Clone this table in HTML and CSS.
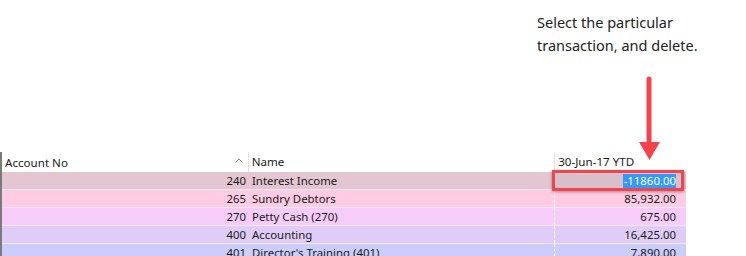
FILE: index.html
```html
<!DOCTYPE html>
<html>
<head>
<meta charset="utf-8">
<link rel="stylesheet" href="styles.css">
</head>
<body>
<div class="page">
  <div class="top">
    <p class="note">Select the particular<br>transaction, and delete.</p>
  </div>
  <div class="grid">
    <div class="row head">
      <div class="c1"><span>Account No</span><svg class="sort" width="8" height="5" viewBox="0 0 8 5"><path d="M0.5 4.5 L4 1 L7.5 4.5" fill="none" stroke="#8a8a8a" stroke-width="1"/></svg></div>
      <div class="c2">Name</div>
      <div class="c3">30-Jun-17 YTD</div>
    </div>
    <div class="row r1">
      <div class="c1 num">240</div>
      <div class="c2">Interest Income</div>
      <div class="c3 num"><span class="editor"><span class="sel">-11860.00</span></span></div>
    </div>
    <div class="row r2">
      <div class="c1 num">265</div>
      <div class="c2">Sundry Debtors</div>
      <div class="c3 num">85,932.00</div>
    </div>
    <div class="row r3">
      <div class="c1 num">270</div>
      <div class="c2">Petty Cash (270)</div>
      <div class="c3 num">675.00</div>
    </div>
    <div class="row r4">
      <div class="c1 num">400</div>
      <div class="c2">Accounting</div>
      <div class="c3 num">16,425.00</div>
    </div>
    <div class="row r5">
      <div class="c1 num">401</div>
      <div class="c2">Director's Training (401)</div>
      <div class="c3 num">7,890.00</div>
    </div>
  </div>
  <div class="focus"></div>
  <svg class="arrow" width="40" height="100" viewBox="0 0 40 100">
    <line x1="13" y1="5" x2="13" y2="70" stroke="#f5434b" stroke-width="5" stroke-linecap="round"/>
    <polygon points="3,68 24,68 13.5,86" fill="#f5434b"/>
  </svg>
</div>
</body>
</html>
```
FILE: styles.css
```css
html, body {
  margin: 0;
  padding: 0;
  background: #ffffff;
}
.page {
  position: relative;
  width: 746px;
  height: 256px;
  overflow: hidden;
  font-family: "Noto Sans", "Open Sans", sans-serif;
  color: #1a1a1a;
}
.top {
  height: 152px;
}
.note {
  margin: 0;
  padding: 11px 0 0 537px;
  font-size: 14.5px;
  line-height: 23px;
  color: #222;
}
.grid {
  width: 684px;
  border-left: 2px solid #7a7a7a;
  font-size: 11.4px;
}
.row {
  display: flex;
  height: 17px;
  line-height: 17px;
  border-bottom: 1px solid #efe8ee;
}
.row.head {
  height: 20px;
  line-height: 19px;
  font-size: 11.6px;
  background: #fff;
  border-bottom: 0;
}
.c1 {
  width: 246px;
  padding-right: 2px;
  box-sizing: border-box;
}
.c2 {
  width: 307px;
  padding-left: 4px;
  box-sizing: border-box;
  border-right: 1px dashed rgba(255,255,255,0.9);
}
.c3 {
  width: 131px;
  padding-right: 10px;
  box-sizing: border-box;
}
.head .c1 {
  display: flex;
  align-items: center;
  justify-content: space-between;
  padding-left: 3px;
  padding-right: 5px;
  border-right: 1px solid #e3e3e3;
  width: 247px;
}
.head .c2 {
  width: 307px;
  padding-left: 3px;
  border-right: 1px solid #e3e3e3;
}
.head .c3 {
  padding-left: 3px;
}
.sort {
  display: block;
  margin-top: -3px;
}
.num {
  text-align: right;
}
.r1 { background: #e3c6d1; }
.r2 { background: #ffcce4; }
.r3 { background: #f6ccf9; }
.r4 { background: #dfcdf7; }
.r5 { background: #cdcdfb; }
.r1 .c3 {
  padding: 2px 6px 1px 1px;
}
.editor {
  display: flex;
  justify-content: flex-end;
  height: 14px;
  line-height: 14px;
  background: #d8bfca;
  padding-right: 4px;
}
.sel {
  background: #3399ff;
  color: #fff;
  padding-left: 1px;
}
.focus {
  position: absolute;
  left: 552px;
  top: 170px;
  width: 126px;
  height: 15px;
  border: 3px solid #f2444b;
  box-shadow: 0 1px 3px rgba(0,0,0,0.35);
}
.arrow {
  position: absolute;
  left: 636px;
  top: 74px;
}
```
